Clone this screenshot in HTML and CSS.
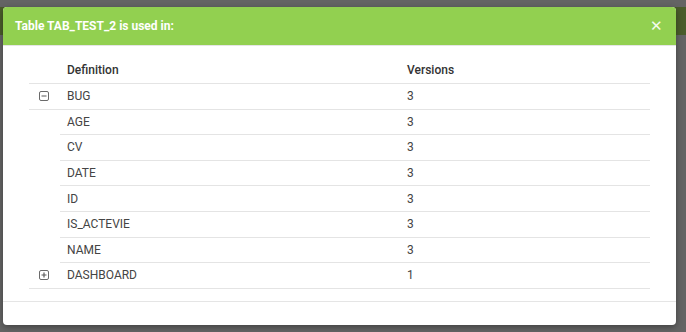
FILE: index.html
```html
<!DOCTYPE html>
<html lang="en">
<head>
    <meta charset="UTF-8">
    <meta name="viewport" content="width=device-width, initial-scale=1.0">
    <title>Table usage</title>
    <link rel="stylesheet" href="styles.css">
</head>
<body>

    <div class="backdrop">
        <div class="back-bar"></div>
    </div>

    <div class="modal">
        <div class="modal-header">
            <span class="modal-title">Table TAB_TEST_2 is used in:</span>
            <span class="close">&#x2715;</span>
        </div>

        <div class="modal-body">
            <table>
                <tr>
                    <th class="toggle"></th>
                    <th class="name">Definition</th>
                    <th>Versions</th>
                </tr>
                <tr class="parent">
                    <td class="toggle">
                        <svg class="box" width="10" height="10" viewBox="0 0 10 10">
                            <rect x="0.5" y="0.5" width="9" height="9" rx="1.5" fill="none" stroke="#6a6a6a" stroke-width="1"/>
                            <path d="M2.5 5h5" stroke="#5a5a5a" stroke-width="1.2"/>
                        </svg>
                    </td>
                    <td>BUG</td>
                    <td>3</td>
                </tr>
                <tr class="child">
                    <td class="toggle"></td>
                    <td>AGE</td>
                    <td>3</td>
                </tr>
                <tr class="child">
                    <td class="toggle"></td>
                    <td>CV</td>
                    <td>3</td>
                </tr>
                <tr class="child">
                    <td class="toggle"></td>
                    <td>DATE</td>
                    <td>3</td>
                </tr>
                <tr class="child">
                    <td class="toggle"></td>
                    <td>ID</td>
                    <td>3</td>
                </tr>
                <tr class="child">
                    <td class="toggle"></td>
                    <td>IS_ACTEVIE</td>
                    <td>3</td>
                </tr>
                <tr class="child">
                    <td class="toggle"></td>
                    <td>NAME</td>
                    <td>3</td>
                </tr>
                <tr class="parent">
                    <td class="toggle">
                        <svg class="box" width="10" height="10" viewBox="0 0 10 10">
                            <rect x="0.5" y="0.5" width="9" height="9" rx="1.5" fill="none" stroke="#6a6a6a" stroke-width="1"/>
                            <path d="M2.5 5h5M5 2.5v5" stroke="#5a5a5a" stroke-width="1.2"/>
                        </svg>
                    </td>
                    <td>DASHBOARD</td>
                    <td>1</td>
                </tr>
            </table>
        </div>

        <div class="modal-footer"></div>
    </div>

</body>
</html>
```

FILE: styles.css
```css
body {
    margin: 0;
    height: 332px;
    overflow: hidden;
    background-color: #646464;
    font-family: Roboto, 'Liberation Sans', sans-serif;
    position: relative;
}

.backdrop {
    padding-top: 7px;
}

.back-bar {
    height: 28px;
    background-color: #4a5c2b;
}

.modal {
    position: absolute;
    top: 7px;
    left: 3px;
    width: 673px;
    background-color: #ffffff;
    border-radius: 4px;
    box-shadow: 0 2px 6px rgba(0, 0, 0, 0.35);
    overflow: hidden;
}

.modal-header {
    display: flex;
    align-items: center;
    justify-content: space-between;
    height: 38px;
    padding: 0 13px 0 12px;
    background-color: #92d050;
    border-bottom: 1px solid #e5e5e5;
}

.modal-title {
    color: #ffffff;
    font-size: 12px;
    font-weight: bold;
}

.close {
    color: #f4fbec;
    font-size: 15px;
}

.modal-body {
    padding: 11px 26px 12px 26px;
    border-bottom: 1px solid #e5e5e5;
}

.modal-footer {
    height: 23px;
}

table {
    width: 100%;
    border-collapse: collapse;
    font-size: 12px;
    color: #444444;
}

th, td {
    text-align: left;
    padding: 4px 7px;
    height: 16.6px;
    border-bottom: 1px solid #e4e4e4;
}

th {
    color: #333333;
    font-weight: 500;
    height: 17px;
    padding-top: 4px;
    padding-bottom: 5px;
}

th.name {
    width: 326px;
}

.toggle {
    width: 10px;
    padding-left: 10px;
    padding-right: 11px;
}

.child .toggle {
    border-bottom: none;
}

.box {
    display: block;
}
```
